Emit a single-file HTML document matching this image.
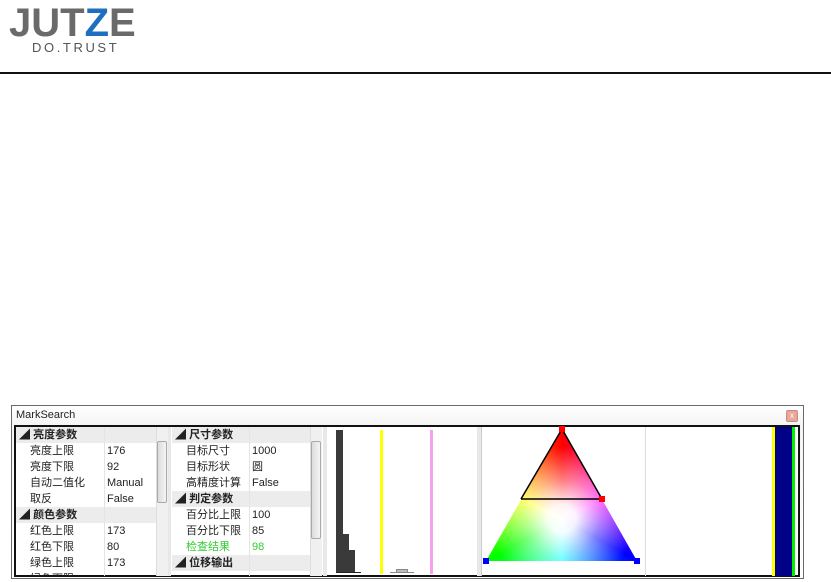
<!DOCTYPE html>
<html><head><meta charset="utf-8"><style>
*{margin:0;padding:0;box-sizing:border-box}
body{width:831px;height:582px;background:#fff;position:relative;overflow:hidden;font-family:"Liberation Sans","Noto Sans CJK SC",sans-serif}
.a{position:absolute}
.logo{left:9px;top:1px;font:bold 40px/44px "Liberation Sans",sans-serif;color:#6a6a6a;letter-spacing:0px}
.dt{left:32px;top:40px;font:13px/16px "Liberation Sans",sans-serif;color:#555;letter-spacing:2.6px}
.win{left:11px;top:405px;width:793px;height:174px;border:1px solid #6a6a6a;background:linear-gradient(#fff,#f4f4f4 20px,#fff)}
.frame{left:14px;top:425px;width:786px;height:152px;border:2px solid #111;background:#fff}
.grid{font-size:11px;color:#222}
.row{position:absolute;height:16px;line-height:16px;white-space:nowrap}
.h{background:#ececec;font-weight:bold}
.sb{position:absolute;background:#f0f0f0;border-left:1px solid #ddd}
.th{position:absolute;background:linear-gradient(90deg,#dcdcdc,#f4f4f4);border:1px solid #aaa;border-radius:2px}
</style></head><body>
<div class="a logo">JUT<span style="color:#1e6fc0">Z</span>E</div>
<div class="a dt">DO.TRUST</div>
<div class="a" style="left:0;top:72px;width:831px;height:2px;background:#111"></div>

<div class="a win"></div>
<div class="a" style="left:16px;top:409px;font-size:11px;color:#222">MarkSearch</div>
<div class="a" style="left:786px;top:410px;width:12px;height:12px;border:1px solid #c88;border-radius:2px;background:#e8a898;font-size:8px;color:#fff;text-align:center;line-height:10px">x</div>
<div class="a frame"></div>

<!-- grid 1 -->
<div class="a grid" style="left:16px;top:427px;width:152px;height:149px;overflow:hidden">
<div class="row h" style="top:0;left:0;width:140px">&nbsp;◢ 亮度参数</div>
<div class="row" style="top:16px;left:14px">亮度上限</div><div class="row" style="top:16px;left:91px">176</div>
<div class="row" style="top:32px;left:14px">亮度下限</div><div class="row" style="top:32px;left:91px">92</div>
<div class="row" style="top:48px;left:14px">自动二值化</div><div class="row" style="top:48px;left:91px">Manual</div>
<div class="row" style="top:64px;left:14px">取反</div><div class="row" style="top:64px;left:91px">False</div>
<div class="row h" style="top:80px;left:0;width:140px">&nbsp;◢ 颜色参数</div>
<div class="row" style="top:96px;left:14px">红色上限</div><div class="row" style="top:96px;left:91px">173</div>
<div class="row" style="top:112px;left:14px">红色下限</div><div class="row" style="top:112px;left:91px">80</div>
<div class="row" style="top:128px;left:14px">绿色上限</div><div class="row" style="top:128px;left:91px">173</div>
<div class="row" style="top:144px;left:14px">绿色下限</div>
<div class="a" style="left:88px;top:0;width:1px;height:150px;background:#e4e4e4"></div>
<div class="sb" style="left:140px;top:0;width:12px;height:150px"></div>
<div class="th" style="left:141px;top:14px;width:10px;height:62px"></div>
</div>
<div class="a" style="left:168px;top:427px;width:3px;height:149px;background:#e8e8e8"></div>

<!-- grid 2 -->
<div class="a grid" style="left:172px;top:427px;width:151px;height:149px;overflow:hidden">
<div class="row h" style="top:0;left:0;width:138px">&nbsp;◢ 尺寸参数</div>
<div class="row" style="top:16px;left:14px">目标尺寸</div><div class="row" style="top:16px;left:80px">1000</div>
<div class="row" style="top:32px;left:14px">目标形状</div><div class="row" style="top:32px;left:80px">圆</div>
<div class="row" style="top:48px;left:14px">高精度计算</div><div class="row" style="top:48px;left:80px">False</div>
<div class="row h" style="top:64px;left:0;width:138px">&nbsp;◢ 判定参数</div>
<div class="row" style="top:80px;left:14px">百分比上限</div><div class="row" style="top:80px;left:80px">100</div>
<div class="row" style="top:96px;left:14px">百分比下限</div><div class="row" style="top:96px;left:80px">85</div>
<div class="row" style="top:112px;left:14px;color:#3c3">检查结果</div><div class="row" style="top:112px;left:80px;color:#3c3">98</div>
<div class="row h" style="top:128px;left:0;width:138px">&nbsp;◢ 位移输出</div>
<div class="a" style="left:77px;top:0;width:1px;height:150px;background:#e4e4e4"></div>
<div class="sb" style="left:138px;top:0;width:12px;height:150px"></div>
<div class="th" style="left:139px;top:14px;width:10px;height:98px"></div>
</div>
<div class="a" style="left:323px;top:427px;width:4px;height:149px;background:#e8e8e8"></div>

<!-- histogram -->
<div class="a" style="left:336px;top:430px;width:7px;height:143px;background:#3a3a3a"></div>
<div class="a" style="left:343px;top:534px;width:6px;height:39px;background:#3a3a3a"></div>
<div class="a" style="left:349px;top:550px;width:6px;height:23px;background:#3a3a3a"></div>
<div class="a" style="left:336px;top:572px;width:25px;height:1px;background:#222"></div>
<div class="a" style="left:380px;top:430px;width:3px;height:144px;background:#ff0"></div>
<div class="a" style="left:430px;top:430px;width:3px;height:144px;background:#f6a0f0"></div>
<div class="a" style="left:396px;top:569px;width:12px;height:4px;background:#bbb;border:1px solid #888"></div>
<div class="a" style="left:390px;top:572px;width:24px;height:1px;background:#888"></div>
<div class="a" style="left:477px;top:427px;width:5px;height:149px;background:#e8e8e8;border-right:1px solid #ccc"></div>
<div class="a" style="left:645px;top:427px;width:1px;height:149px;background:#ddd"></div>

<!-- triangle -->
<div class="a" style="left:486px;top:429px;width:151px;height:132px;clip-path:polygon(50.3% 0,100% 100%,0 100%);background:radial-gradient(circle at 50.3% 68%,#fff 0,rgba(255,255,255,.95) 14px,rgba(255,255,255,.5) 38px,rgba(255,255,255,0) 72px),conic-gradient(from 0deg at 50.3% 68%,#f00,#f0f 64deg,#00f 119deg,#0ff 180deg,#0f0 240deg,#ff0 296deg,#f00)"></div>
<svg class="a" style="left:0;top:0" width="831" height="582"><polyline points="521,499 562,429 602,499 521,499" fill="none" stroke="#000" stroke-width="1.5"/></svg>
<div class="a" style="left:559px;top:426px;width:6px;height:6px;background:#f00"></div>
<div class="a" style="left:599px;top:496px;width:6px;height:6px;background:#f00"></div>
<div class="a" style="left:483px;top:558px;width:6px;height:6px;background:#00f"></div>
<div class="a" style="left:634px;top:558px;width:6px;height:6px;background:#00f"></div>

<!-- right bar -->
<div class="a" style="left:772px;top:427px;width:3px;height:149px;background:#ff0"></div>
<div class="a" style="left:775px;top:427px;width:17px;height:149px;background:#008"></div>
<div class="a" style="left:792px;top:427px;width:3px;height:149px;background:#0e0"></div>
</body></html>
